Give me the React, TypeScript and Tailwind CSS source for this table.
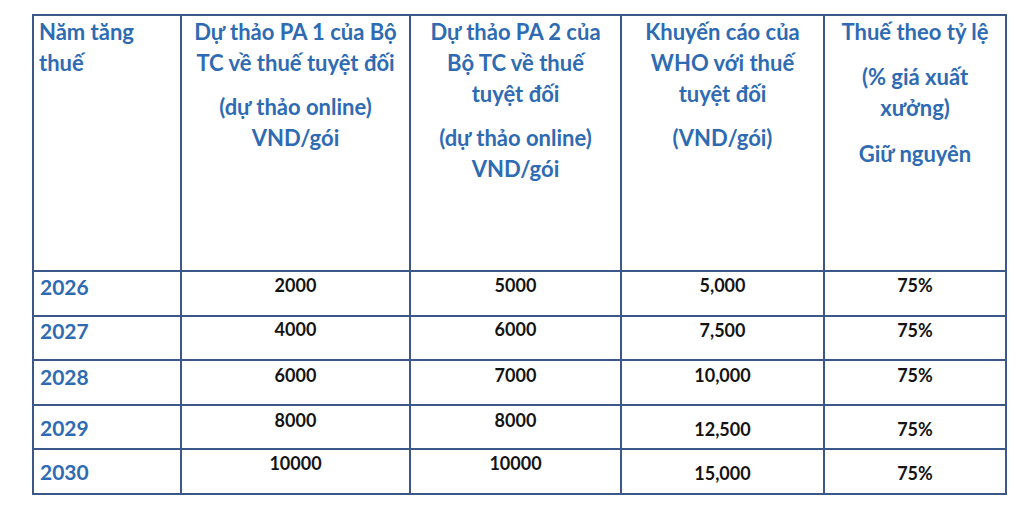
const rows = [
  { year: "2026", pa1: "2000", pa2: "5000", who: "5,000", rate: "75%", h: "h-[45px]", yPt: "pt-[3px]", mPt: "pt-[1px]", rPt: "pt-[1px]" },
  { year: "2027", pa1: "4000", pa2: "6000", who: "7,500", rate: "75%", h: "h-[44px]", yPt: "pt-[2px]", mPt: "pt-0", rPt: "pt-[1px]" },
  { year: "2028", pa1: "6000", pa2: "7000", who: "10,000", rate: "75%", h: "h-[45px]", yPt: "pt-[4px]", mPt: "pt-[2px]", rPt: "pt-[2px]" },
  { year: "2029", pa1: "8000", pa2: "8000", who: "12,500", rate: "75%", h: "h-[44px]", yPt: "pt-[10px]", mPt: "pt-[2px]", rPt: "pt-[11px]" },
  { year: "2030", pa1: "10000", pa2: "10000", who: "15,000", rate: "75%", h: "h-[45px]", yPt: "pt-[10px]", mPt: "pt-[1px]", rPt: "pt-[11px]" },
];

const cell = "border-r-2 border-b-2 border-[#3c5888]";
const head = "text-[22px] leading-[31px] font-bold text-[#2e6bb2] whitespace-nowrap";
const num = "text-[18px] leading-[24px] font-bold text-[#141414] text-center";

export default function App() {
  return (
    <div className="w-[1020px] h-[510px] bg-white pt-[14px] pl-[32px] font-['Lato','Noto_Sans',sans-serif]">
      <div className="grid grid-cols-[148px_229px_211px_203px_182px] w-fit border-l-2 border-t-2 border-[#3c5888]">
        {/* header */}
        <div className={`${cell} h-[256px] pl-[5px] ${head}`}>
          Năm tăng
          <br />
          thuế
        </div>
        <div className={`${cell} h-[256px] text-center ${head}`}>
          <p>
            Dự thảo PA 1 của Bộ
            <br />
            TC về thuế tuyệt đối
          </p>
          <p className="mt-[13px]">
            (dự thảo online)
            <br />
            VND/gói
          </p>
        </div>
        <div className={`${cell} h-[256px] text-center ${head}`}>
          <p>
            Dự thảo PA 2 của
            <br />
            Bộ TC về thuế
            <br />
            tuyệt đối
          </p>
          <p className="mt-[13px]">
            (dự thảo online)
            <br />
            VND/gói
          </p>
        </div>
        <div className={`${cell} h-[256px] text-center ${head}`}>
          <p>
            Khuyến cáo của
            <br />
            WHO với thuế
            <br />
            tuyệt đối
          </p>
          <p className="mt-[13px]">(VND/gói)</p>
        </div>
        <div className={`${cell} h-[256px] text-center ${head}`}>
          <p>Thuế theo tỷ lệ</p>
          <p className="mt-[14px]">
            (% giá xuất
            <br />
            xưởng)
          </p>
          <p className="mt-[15px]">Giữ nguyên</p>
        </div>

        {rows.map((r) => (
          <div key={r.year} className="contents">
            <div className={`${cell} ${r.h} ${r.yPt} pl-[6px] text-[21px] leading-[24px] font-bold text-[#2e6bb2]`}>
              {r.year}
            </div>
            <div className={`${cell} ${r.h} ${r.mPt} ${num}`}>{r.pa1}</div>
            <div className={`${cell} ${r.h} ${r.mPt} ${num}`}>{r.pa2}</div>
            <div className={`${cell} ${r.h} ${r.rPt} ${num}`}>{r.who}</div>
            <div className={`${cell} ${r.h} ${r.rPt} ${num}`}>{r.rate}</div>
          </div>
        ))}
      </div>
    </div>
  );
}
